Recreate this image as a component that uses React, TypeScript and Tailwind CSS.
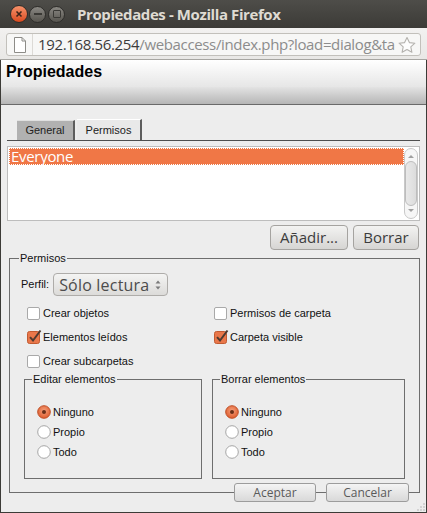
import React from "react";

const ubuntu = "font-['Open_Sans','DejaVu_Sans',sans-serif]";
const arial = "font-['Liberation_Sans',Arial,sans-serif]";

function WindowButtons() {
  return (
    <div className="flex items-center gap-[1px]">
      <span className="w-[18px] h-[18px] rounded-full border border-[#2e2d2a] bg-gradient-to-b from-[#f59169] to-[#d9491d] flex items-center justify-center">
        <svg width="8" height="8" viewBox="0 0 8 8">
          <path d="M1.5 1.5L6.5 6.5M6.5 1.5L1.5 6.5" stroke="#3b2419" strokeWidth="1.6" />
        </svg>
      </span>
      <span className="w-[17px] h-[17px] rounded-full border border-[#2e2d2a] bg-gradient-to-b from-[#8a8883] to-[#57554f] flex items-center justify-center">
        <span className="w-[8px] h-[2px] bg-[#3a3935]" />
      </span>
      <span className="ml-[1px] w-[17px] h-[17px] rounded-full border border-[#2e2d2a] bg-gradient-to-b from-[#8a8883] to-[#57554f] flex items-center justify-center">
        <span className="w-[8px] h-[8px] border-[1.5px] border-[#3a3935] rounded-[1px]" />
      </span>
    </div>
  );
}

function UrlBar() {
  return (
    <div className="h-[32px] bg-gradient-to-b from-[#f2f1f0] to-[#e9e8e6] border-b border-[#a7a6a2] px-[6px] pt-[5px]">
      <div className="h-[23px] flex items-center rounded-[3px] border border-[#c2c0bb] bg-[#f7f7f6]">
        <div className="w-[26px] h-full flex items-center justify-center border-r border-[#dcdad6]">
          <svg width="12" height="16" viewBox="0 0 12 16">
            <path d="M0.5 0.5H8L11.5 4V15.5H0.5Z" fill="#fff" stroke="#8d8c88" />
            <path d="M8 0.5V4H11.5" fill="none" stroke="#8d8c88" />
          </svg>
        </div>
        <div className={`${ubuntu} ml-[5px] flex-1 whitespace-nowrap text-[15px] leading-none tracking-[-0.35px]`}>
          <span className="text-[#3c3c3c]">192.168.56.254</span>
          <span className="text-[#8c8c8c]">/webaccess/index.php?load=dialog&amp;ta</span>
        </div>
        <svg width="20" height="18" viewBox="0 0 20 18" className="mr-[3px]">
          <path
            d="M10 1.5L12.4 6.6L17.9 7.2L13.8 10.9L14.9 16.3L10 13.5L5.1 16.3L6.2 10.9L2.1 7.2L7.6 6.6Z"
            fill="#fdfdfd"
            stroke="#b4b2ae"
            strokeWidth="1.1"
            strokeLinejoin="round"
          />
        </svg>
      </div>
    </div>
  );
}

function CheckBox({ checked, label }: { checked: boolean; label: string }) {
  return (
    <div className="flex items-center h-[24px]">
      {checked ? (
        <svg width="15" height="15" viewBox="0 0 15 15" className="-mt-[2px]">
          <rect x="0.5" y="2.5" width="12" height="12" rx="2" fill="#e9774a" stroke="#c15a31" />
          <path d="M3 8.2L6 11.5L13.5 1.5" fill="none" stroke="#4d3a30" strokeWidth="2" />
        </svg>
      ) : (
        <span className="w-[13px] h-[13px] rounded-[2px] border border-[#a9a9a9] bg-white" />
      )}
      <span className={`${checked ? "ml-[1px]" : "ml-[3px]"} text-[11px] text-[#111]`}>{label}</span>
    </div>
  );
}

function Radio({ checked, label }: { checked: boolean; label: string }) {
  return (
    <div className="flex items-center h-[20px]">
      {checked ? (
        <svg width="14" height="14" viewBox="0 0 14 14">
          <defs>
            <radialGradient id="rg" cx="50%" cy="40%" r="60%">
              <stop offset="0%" stopColor="#f5a17d" />
              <stop offset="100%" stopColor="#de5b2c" />
            </radialGradient>
          </defs>
          <circle cx="7" cy="7" r="6.3" fill="url(#rg)" stroke="#bf5129" />
          <circle cx="7" cy="7" r="2" fill="#6a2f18" />
        </svg>
      ) : (
        <svg width="14" height="14" viewBox="0 0 14 14">
          <circle cx="7" cy="7" r="6.3" fill="#fff" stroke="#a6a6a6" />
        </svg>
      )}
      <span className="ml-[2px] text-[11px] text-[#111]">{label}</span>
    </div>
  );
}

function Group({ title, width }: { title: string; width: string }) {
  return (
    <fieldset className={`${width} h-[106px] border border-[#6e6e6e] pl-[12px] pt-[16px]`}>
      <legend className="-ml-[5px] px-[1px] text-[11px] leading-[13px] text-[#111]">{title}</legend>
      <Radio checked label="Ninguno" />
      <Radio checked={false} label="Propio" />
      <Radio checked={false} label="Todo" />
    </fieldset>
  );
}

function SmallButton({ label, width }: { label: string; width: string }) {
  return (
    <button
      type="button"
      className={`${ubuntu} ${width} h-[19px] rounded-[3px] border border-[#9c9c9c] bg-gradient-to-b from-[#f4f4f4] to-[#d9d9d9] text-[12px] leading-none text-[#5a5a5a]`}
    >
      {label}
    </button>
  );
}

function BigButton({ label, width }: { label: string; width: string }) {
  return (
    <button
      type="button"
      className={`${ubuntu} ${width} h-[25px] rounded-[4px] border border-[#a5a3a0] bg-gradient-to-b from-[#f3f3f2] to-[#d6d5d3] text-[15px] leading-none text-[#3c3c3c]`}
    >
      {label}
    </button>
  );
}

export default function App() {
  return (
    <div className={`${arial} w-[427px] h-[513px] overflow-hidden flex flex-col bg-[#3c3b37]`}>
      <div className="h-[28px] shrink-0 flex items-center pl-[10px] bg-gradient-to-b from-[#4e4d49] to-[#3c3b37]">
        <WindowButtons />
        <span className={`${ubuntu} ml-[12px] text-[15px] font-bold text-[#dfdbd2] tracking-[-0.4px]`}>
          Propiedades - Mozilla Firefox
        </span>
      </div>
      <UrlBar />

      <div className="flex-1 flex flex-col mx-[1px] mb-[1px] bg-[#ededed]">
        <div className="h-[27px] shrink-0 bg-gradient-to-b from-[#ffffff] to-[#e6e6e6] pl-[5px] pt-[2px]">
          <h1 className="text-[16px] font-bold leading-[20px] text-black">Propiedades</h1>
        </div>
        <div className="h-[18px] shrink-0 bg-gradient-to-b from-[#e3e3e3] to-[#b6b6b6] border-b border-[#6a6a6a]" />

        <div className="px-[6px] flex flex-col">
          <div className="mt-[14px] flex items-end pl-[10px] border-b border-[#4f4f4f] h-[22px]">
            <div className="w-[58px] h-[20px] bg-[#b1b1b1] border-t border-[#e0e0e0] border-r-2 border-r-[#5d5d5d] flex items-center justify-center text-[11px] text-[#222]">
              General
            </div>
            <div className="ml-[2px] w-[65px] h-[21px] bg-[#e9e9e9] border-t border-[#ffffff] border-r-2 border-r-[#5d5d5d] flex items-center justify-center text-[11px] text-[#222]">
              Permisos
            </div>
          </div>

          <div className="mt-[5px] h-[75px] flex border border-[#bdbdbd] bg-white">
            <div className="flex-1 pt-[1px] pl-[1px]">
              <div className={`${ubuntu} h-[17px] bg-[#f07746] border border-dotted border-white text-[15px] leading-[15px] tracking-[-0.3px] text-white pl-[1px]`}>
                Everyone
              </div>
            </div>
            <div className="w-[14px] mr-[1px] my-[1px] rounded-[7px] border border-[#c9c9c9] bg-[#f6f6f6] flex flex-col items-center">
              <svg width="8" height="10" viewBox="0 0 8 10" className="mt-[2px]">
                <path d="M1 7L4 4L7 7Z" fill="#a0a0a0" />
              </svg>
              <div className="w-[12px] flex-1 rounded-[6px] border border-[#bdbdbd] bg-gradient-to-r from-[#e9e9e9] to-[#dcdcdc]" />
              <svg width="8" height="10" viewBox="0 0 8 10" className="mb-[2px]">
                <path d="M1 3L4 6L7 3Z" fill="#a0a0a0" />
              </svg>
            </div>
          </div>

          <div className="mt-[4px] flex justify-end gap-[5px] pr-[1px]">
            <BigButton label="Añadir..." width="w-[78px]" />
            <BigButton label="Borrar" width="w-[66px]" />
          </div>

          <fieldset className="mt-[2px] mx-[2px] border border-[#6e6e6e] pl-[11px] pr-[14px] pb-[13px]">
            <legend className="-ml-[2px] px-[1px] text-[11px] leading-[13px] text-[#111]">Permisos</legend>

            <div className="mt-[8px] flex items-center">
              <span className="text-[11px] text-[#111]">Perfil:</span>
              <div className="ml-[4px] w-[115px] h-[23px] rounded-[4px] border border-[#aeaca9] bg-gradient-to-b from-[#f4f4f3] to-[#dcdbd9] flex items-center pl-[5px] pr-[6px]">
                <span className={`${ubuntu} flex-1 text-[16px] leading-none tracking-[0.2px] text-[#4c4c4c]`}>Sólo lectura</span>
                <svg width="6" height="12" viewBox="0 0 6 12">
                  <path d="M0.5 4.5L3 1.5L5.5 4.5Z" fill="#7a7a7a" />
                  <path d="M0.5 7.5L3 10.5L5.5 7.5Z" fill="#7a7a7a" />
                </svg>
              </div>
            </div>

            <div className="mt-[5px] pl-[6px] grid grid-cols-[187px_1fr]">
              <CheckBox checked={false} label="Crear objetos" />
              <CheckBox checked={false} label="Permisos de carpeta" />
              <CheckBox checked label="Elementos leídos" />
              <CheckBox checked label="Carpeta visible" />
              <CheckBox checked={false} label="Crear subcarpetas" />
            </div>

            <div className="mt-[0px] pl-[3px] flex gap-[10px]">
              <Group title="Editar elementos" width="w-[178px]" />
              <Group title="Borrar elementos" width="w-[193px]" />
            </div>
          </fieldset>

          <div className="-mt-[10px] flex justify-end gap-[10px] pr-[11px]">
            <SmallButton label="Aceptar" width="w-[82px]" />
            <SmallButton label="Cancelar" width="w-[83px]" />
          </div>
        </div>

        <div className="flex-1 flex items-end justify-end pr-[1px] pb-[1px]">
          <svg width="8" height="8" viewBox="0 0 8 8">
            <circle cx="7" cy="7" r="0.7" fill="#a5a5a5" />
            <circle cx="4" cy="7" r="0.7" fill="#a5a5a5" />
            <circle cx="7" cy="4" r="0.7" fill="#a5a5a5" />
            <circle cx="1" cy="7" r="0.7" fill="#a5a5a5" />
            <circle cx="4" cy="4" r="0.7" fill="#a5a5a5" />
            <circle cx="7" cy="1" r="0.7" fill="#a5a5a5" />
          </svg>
        </div>
      </div>
    </div>
  );
}
